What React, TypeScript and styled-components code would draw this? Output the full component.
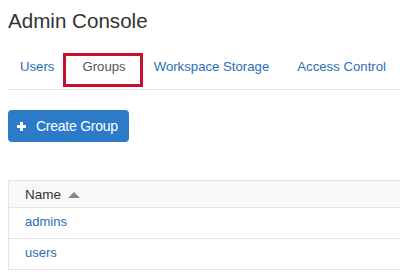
import styled, { createGlobalStyle } from 'styled-components';

const GlobalStyle = createGlobalStyle`
  body {
    margin: 0;
    background: #fff;
    font-family: "Liberation Sans", Arial, sans-serif;
    overflow: hidden;
  }
`;

const Page = styled.div`
  padding: 9px 0 0 8px;
`;

const Title = styled.h1`
  margin: 0;
  font-size: 20.6px;
  line-height: 24px;
  font-weight: normal;
  color: #333;
`;

const TabNav = styled.nav`
  display: flex;
  margin-top: 25px;
  padding-bottom: 7px;
  border-bottom: 1px solid #e2e2e2;
`;

const Tab = styled.a<{ $active?: boolean }>`
  display: block;
  height: 24px;
  padding: ${(p) => (p.$active ? '0 12px 0 14px' : '0 14px')};
  margin-right: ${(p) => (p.$active ? '2px' : '0')};
  font-size: 13.2px;
  line-height: 18px;
  color: ${(p) => (p.$active ? '#555' : '#2a6eb5')};
  text-decoration: none;
  cursor: pointer;
  outline: ${(p) => (p.$active ? '3px solid #c8102e' : 'none')};
  outline-offset: 2px;

  &:first-child {
    padding-left: 12px;
  }
`;

const PrimaryButton = styled.button`
  display: inline-flex;
  align-items: center;
  gap: 10px;
  height: 32px;
  margin-top: 20px;
  padding: 0 11px 0 9px;
  border: 0;
  border-radius: 4px;
  background: #2b7bc8;
  color: #fff;
  font-family: inherit;
  font-size: 14px;
  letter-spacing: -0.25px;
  cursor: pointer;
`;

const Table = styled.table`
  margin-top: 38px;
  width: calc(100% + 20px);
  border-collapse: collapse;
  border-top: 1px solid #e4e4e4;
  border-left: 1px solid #e4e4e4;
`;

const HeadCell = styled.th`
  padding: 6px 16px 4px;
  background: #f8f8f8;
  text-align: left;
  font-size: 13.5px;
  font-weight: normal;
  line-height: 16px;
  color: #333;
`;

const SortIcon = styled.svg`
  margin-left: 7px;
  vertical-align: 1px;
`;

const Row = styled.tr`
  border-top: 1px solid #e4e4e4;
  border-bottom: 1px solid #e4e4e4;
`;

const Cell = styled.td`
  padding: 6px 16px 8px;
  font-size: 13px;
  line-height: 16px;
`;

const GroupLink = styled.a`
  color: #2a6eb5;
  text-decoration: none;
`;

const tabs = ['Users', 'Groups', 'Workspace Storage', 'Access Control'];
const groups = ['admins', 'users'];

export default function App() {
  return (
    <>
      <GlobalStyle />
      <Page>
        <Title>Admin Console</Title>
        <TabNav>
          {tabs.map((t) => (
            <Tab key={t} $active={t === 'Groups'}>
              {t}
            </Tab>
          ))}
        </TabNav>
        <PrimaryButton>
          <svg width="9" height="9" viewBox="0 0 9 9">
            <path d="M3 0h3v3h3v3H6v3H3V6H0V3h3z" fill="#fff" />
          </svg>
          Create Group
        </PrimaryButton>
        <Table>
          <thead>
            <tr>
              <HeadCell>
                Name
                <SortIcon width="12" height="6" viewBox="0 0 12 6">
                  <path d="M6 0L12 6H0z" fill="#888" />
                </SortIcon>
              </HeadCell>
            </tr>
          </thead>
          <tbody>
            {groups.map((g) => (
              <Row key={g}>
                <Cell>
                  <GroupLink>{g}</GroupLink>
                </Cell>
              </Row>
            ))}
          </tbody>
        </Table>
      </Page>
    </>
  );
}
